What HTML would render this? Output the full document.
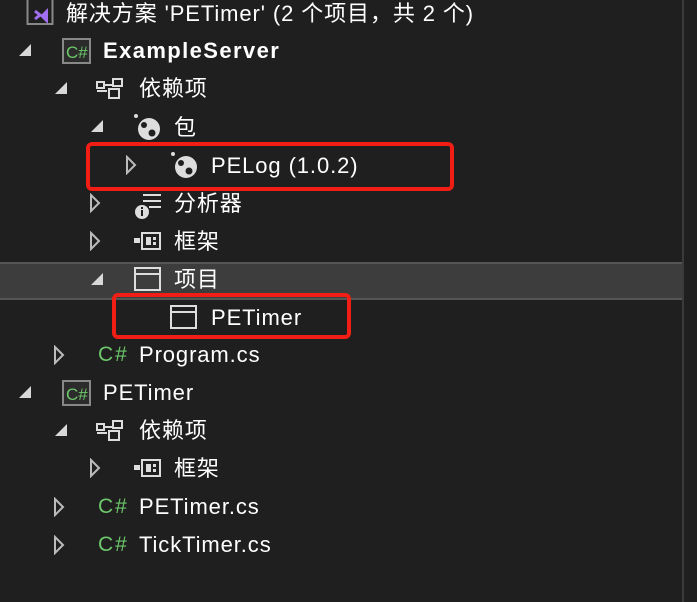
<!DOCTYPE html>
<html><head><meta charset="utf-8"><style>
body{margin:0;width:697px;height:602px;background:#1f1f1f;overflow:hidden;position:relative;font-family:"Liberation Sans","Noto Sans CJK SC",sans-serif;color:#fff;font-size:22px}
.r{position:absolute;height:26px;line-height:26px;white-space:nowrap;letter-spacing:0.9px}
.i{position:absolute}
.exp{position:absolute;width:0;height:0;border-left:12px solid transparent;border-bottom:12px solid #d8d8d8}
.cs{position:absolute;color:#6cc76a;font-size:21px;line-height:26px;font-family:"Liberation Sans",sans-serif;letter-spacing:2px}
.box{position:absolute;border:4px solid #f01e14;border-radius:6px}
</style></head><body>
<div style="position:absolute;left:0;top:262px;width:683px;height:34px;background:#3d3d3d;border-top:2px solid #555;border-bottom:2px solid #555"></div>
<div style="position:absolute;left:682px;top:0;width:2px;height:602px;background:#3a3a3a"></div>

<svg class="i" style="left:26px;top:0" width="28" height="26"><rect x="1.5" y="-3" width="25" height="27" fill="none" stroke="#888" stroke-width="2"/><path d="M9 11l5 4-5 4" stroke="#a070f0" stroke-width="3" fill="none"/><path d="M14 16l8-8v16z" fill="#a070f0"/></svg>
<div class="r" style="left:66px;top:1px">解决方案 'PETimer' (2 个项目，共 2 个)</div>

<div class="exp" style="left:19px;top:44px"></div>
<svg class="i" style="left:62px;top:38px" width="29" height="26"><rect x="1" y="1" width="27" height="24" fill="#2b2b2b" stroke="#888" stroke-width="2"/><text x="4" y="20" fill="#6cc76a" font-size="17" font-family="Liberation Sans">C#</text></svg>
<div class="r" style="left:103px;top:38px;font-weight:bold;letter-spacing:1.4px">ExampleServer</div>

<div class="exp" style="left:55px;top:82px"></div>
<svg class="i" style="left:95px;top:78px" width="34" height="22" fill="none" stroke="#ddd" stroke-width="2"><rect x="2" y="4" width="7" height="6"/><rect x="18" y="1" width="9" height="7"/><rect x="14" y="11" width="10" height="9"/><path d="M2 13h10M9 7h9"/></svg>
<div class="r" style="left:139px;top:76px">依赖项</div>

<div class="exp" style="left:91px;top:120px"></div>
<svg class="i" style="left:132px;top:112px" width="32" height="30"><circle cx="4" cy="4" r="2" fill="#ddd"/><circle cx="17" cy="17" r="11" fill="#ddd"/><circle cx="12" cy="13" r="3" fill="#1f1f1f"/><circle cx="20" cy="21" r="3.5" fill="#1f1f1f"/></svg>
<div class="r" style="left:174px;top:115px">包</div>

<svg class="i" style="left:125px;top:155px" width="12" height="20"><path d="M2 2l8 8-8 8z" fill="none" stroke="#bbb" stroke-width="2"/></svg>
<svg class="i" style="left:169px;top:150px" width="32" height="30"><circle cx="4" cy="4" r="2" fill="#ddd"/><circle cx="17" cy="17" r="11" fill="#ddd"/><circle cx="12" cy="13" r="3" fill="#1f1f1f"/><circle cx="20" cy="21" r="3.5" fill="#1f1f1f"/></svg>
<div class="r" style="left:211px;top:153px">PELog (1.0.2)</div>
<div class="box" style="left:86px;top:142px;width:360px;height:41px"></div>

<svg class="i" style="left:89px;top:193px" width="12" height="20"><path d="M2 2l8 8-8 8z" fill="none" stroke="#bbb" stroke-width="2"/></svg>
<svg class="i" style="left:133px;top:192px" width="30" height="28"><path d="M10 3h18M10 9h18M16 15h12" stroke="#ddd" stroke-width="2"/><circle cx="9" cy="20" r="7" fill="#ddd"/><rect x="8" y="18" width="2" height="6" fill="#1f1f1f"/><rect x="8" y="15" width="2" height="2" fill="#1f1f1f"/></svg>
<div class="r" style="left:174px;top:191px">分析器</div>

<svg class="i" style="left:89px;top:231px" width="12" height="20"><path d="M2 2l8 8-8 8z" fill="none" stroke="#bbb" stroke-width="2"/></svg>
<svg class="i" style="left:133px;top:231px" width="30" height="20"><rect x="1" y="7" width="6" height="5" fill="#ddd"/><rect x="9" y="2" width="18" height="16" fill="none" stroke="#ddd" stroke-width="2"/><rect x="13" y="6" width="5" height="8" fill="#ddd"/><rect x="20" y="6" width="3" height="3" fill="#ddd"/><rect x="20" y="11" width="3" height="3" fill="#ddd"/></svg>
<div class="r" style="left:174px;top:229px">框架</div>

<div class="exp" style="left:91px;top:273px"></div>
<svg class="i" style="left:133px;top:266px" width="30" height="26" fill="none" stroke="#ddd" stroke-width="2"><rect x="2" y="2" width="25" height="22"/><path d="M2 8h25"/></svg>
<div class="r" style="left:174px;top:267px">项目</div>

<svg class="i" style="left:169px;top:304px" width="30" height="26" fill="none" stroke="#ddd" stroke-width="2"><rect x="2" y="2" width="25" height="22"/><path d="M2 8h25"/></svg>
<div class="r" style="left:211px;top:305px">PETimer</div>
<div class="box" style="left:112px;top:293px;width:231px;height:38px"></div>

<svg class="i" style="left:53px;top:345px" width="12" height="20"><path d="M2 2l8 8-8 8z" fill="none" stroke="#bbb" stroke-width="2"/></svg>
<div class="cs" style="left:98px;top:342px">C#</div>
<div class="r" style="left:139px;top:342px">Program.cs</div>

<div class="exp" style="left:19px;top:386px"></div>
<svg class="i" style="left:62px;top:380px" width="29" height="26"><rect x="1" y="1" width="27" height="24" fill="#2b2b2b" stroke="#888" stroke-width="2"/><text x="4" y="20" fill="#6cc76a" font-size="17" font-family="Liberation Sans">C#</text></svg>
<div class="r" style="left:103px;top:380px">PETimer</div>

<div class="exp" style="left:55px;top:424px"></div>
<svg class="i" style="left:95px;top:420px" width="34" height="22" fill="none" stroke="#ddd" stroke-width="2"><rect x="2" y="4" width="7" height="6"/><rect x="18" y="1" width="9" height="7"/><rect x="14" y="11" width="10" height="9"/><path d="M2 13h10M9 7h9"/></svg>
<div class="r" style="left:139px;top:418px">依赖项</div>

<svg class="i" style="left:89px;top:458px" width="12" height="20"><path d="M2 2l8 8-8 8z" fill="none" stroke="#bbb" stroke-width="2"/></svg>
<svg class="i" style="left:133px;top:458px" width="30" height="20"><rect x="1" y="7" width="6" height="5" fill="#ddd"/><rect x="9" y="2" width="18" height="16" fill="none" stroke="#ddd" stroke-width="2"/><rect x="13" y="6" width="5" height="8" fill="#ddd"/><rect x="20" y="6" width="3" height="3" fill="#ddd"/><rect x="20" y="11" width="3" height="3" fill="#ddd"/></svg>
<div class="r" style="left:174px;top:456px">框架</div>

<svg class="i" style="left:53px;top:497px" width="12" height="20"><path d="M2 2l8 8-8 8z" fill="none" stroke="#bbb" stroke-width="2"/></svg>
<div class="cs" style="left:98px;top:494px">C#</div>
<div class="r" style="left:139px;top:494px">PETimer.cs</div>

<svg class="i" style="left:53px;top:535px" width="12" height="20"><path d="M2 2l8 8-8 8z" fill="none" stroke="#bbb" stroke-width="2"/></svg>
<div class="cs" style="left:98px;top:532px">C#</div>
<div class="r" style="left:139px;top:532px">TickTimer.cs</div>
</body></html>
